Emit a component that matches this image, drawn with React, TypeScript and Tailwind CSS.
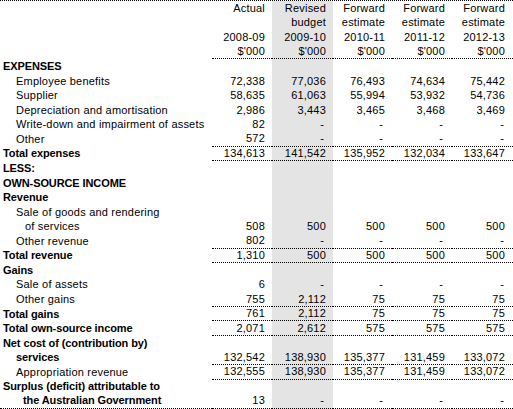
type Row = {
  label: string;
  indent?: number;
  bold?: boolean;
  values?: string[];
  line?: "nums" | "full";
};

const header: string[][] = [
  ["Actual", "Revised", "Forward", "Forward", "Forward"],
  ["", "budget", "estimate", "estimate", "estimate"],
  ["2008-09", "2009-10", "2010-11", "2011-12", "2012-13"],
  ["$'000", "$'000", "$'000", "$'000", "$'000"],
];

const dash = ["-", "-", "-", "-"];

const rows: Row[] = [
  { label: "EXPENSES", bold: true },
  { label: "Employee benefits", indent: 1, values: ["72,338", "77,036", "76,493", "74,634", "75,442"] },
  { label: "Supplier", indent: 1, values: ["58,635", "61,063", "55,994", "53,932", "54,736"] },
  { label: "Depreciation and amortisation", indent: 1, values: ["2,986", "3,443", "3,465", "3,468", "3,469"] },
  { label: "Write-down and impairment of assets", indent: 1, values: ["82", ...dash] },
  { label: "Other", indent: 1, values: ["572", ...dash], line: "nums" },
  { label: "Total expenses", bold: true, values: ["134,613", "141,542", "135,952", "132,034", "133,647"], line: "nums" },
  { label: "LESS:", bold: true },
  { label: "OWN-SOURCE INCOME", bold: true },
  { label: "Revenue", bold: true },
  { label: "Sale of goods and rendering", indent: 1 },
  { label: "of services", indent: 2, values: ["508", "500", "500", "500", "500"] },
  { label: "Other revenue", indent: 1, values: ["802", ...dash], line: "nums" },
  { label: "Total revenue", bold: true, values: ["1,310", "500", "500", "500", "500"], line: "nums" },
  { label: "Gains", bold: true },
  { label: "Sale of assets", indent: 1, values: ["6", ...dash] },
  { label: "Other gains", indent: 1, values: ["755", "2,112", "75", "75", "75"], line: "nums" },
  { label: "Total gains", bold: true, values: ["761", "2,112", "75", "75", "75"], line: "nums" },
  { label: "Total own-source income", bold: true, values: ["2,071", "2,612", "575", "575", "575"], line: "nums" },
  { label: "Net cost of (contribution by)", bold: true },
  { label: "services", bold: true, indent: 1, values: ["132,542", "138,930", "135,377", "131,459", "133,072"], line: "nums" },
  { label: "Appropriation revenue", indent: 1, values: ["132,555", "138,930", "135,377", "131,459", "133,072"], line: "nums" },
  { label: "Surplus (deficit) attributable to", bold: true },
  { label: "the Australian Government", bold: true, indent: 3, values: ["13", ...dash], line: "full" },
];

const indentClass = ["pl-[3px]", "pl-[16px]", "pl-[25px]", "pl-[23px]"];

function NumCell({ v, i, line }: { v: string; i: number; line: boolean }) {
  return (
    <div
      className={`h-[14.57px] flex items-center justify-end tracking-[0.2px] ${i === 4 ? "pr-[8px]" : "pr-[7px]"} ${
        i === 1 ? "bg-[#e4e4e4]" : ""
      } ${line ? "border-b border-dotted border-black" : ""} ${v === "-" ? "pr-[9px]" : ""}`}
    >
      {v}
    </div>
  );
}

export default function App() {
  return (
    <div className="w-[513px] h-[409px] bg-white text-black text-[11px] leading-none font-['Liberation_Sans',Arial,sans-serif] overflow-hidden">
      <div className="grid grid-cols-[212px_60px_61px_59px_60px_61px] border-t border-dotted border-black">
        {header.map((h, r) => (
          <div key={"h" + r} className="contents">
            <div className="h-[14.57px]" />
            {h.map((v, i) => (
              <NumCell key={i} v={v} i={i} line={r === 3} />
            ))}
          </div>
        ))}
        {rows.map((row, r) => (
          <div key={r} className="contents">
            <div
              className={`h-[14.57px] flex items-center whitespace-nowrap ${indentClass[row.indent ?? 0]} ${
                row.bold ? "font-bold tracking-[-0.1px]" : "tracking-[0.2px]"
              } ${row.line === "full" ? "border-b border-dotted border-black" : ""}`}
            >
              {row.label}
            </div>
            {(row.values ?? ["", "", "", "", ""]).map((v, i) => (
              <NumCell key={i} v={v} i={i} line={!!row.line} />
            ))}
          </div>
        ))}
      </div>
    </div>
  );
}
